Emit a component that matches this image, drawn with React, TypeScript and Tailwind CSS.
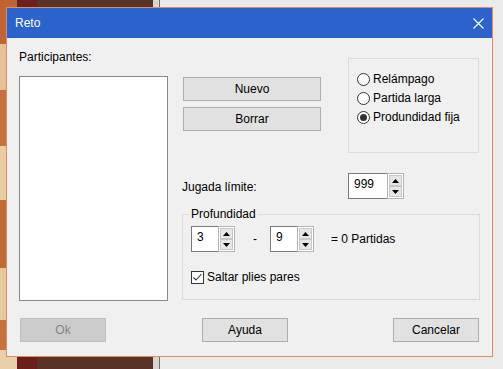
import React from "react";

function Btn({ label, disabled }: { label: string; disabled?: boolean }) {
  return (
    <div
      className={
        disabled
          ? "flex h-[24px] w-[86px] items-center justify-center border border-[#bfbfbf] bg-[#cccccc] text-[#838383]"
          : "flex h-[24px] w-[86px] items-center justify-center border border-[#adadad] bg-[#e1e1e1] text-black"
      }
    >
      {label}
    </div>
  );
}

function WideBtn({ label }: { label: string }) {
  return (
    <div className="flex h-[24px] w-[138px] items-center justify-center border border-[#adadad] bg-[#e1e1e1]">
      {label}
    </div>
  );
}

function Radio({ label, checked }: { label: string; checked?: boolean }) {
  return (
    <div className="flex h-[19px] items-center gap-[3px]">
      <div className="flex h-[13px] w-[13px] items-center justify-center rounded-full border border-[#333333] bg-white">
        {checked ? <div className="h-[7px] w-[7px] rounded-full bg-[#333333]" /> : null}
      </div>
      <span>{label}</span>
    </div>
  );
}

function Tri({ up }: { up?: boolean }) {
  return (
    <svg width="7" height="4" viewBox="0 0 7 4">
      {up ? <path d="M0 4 L3.5 0 L7 4 Z" fill="#000" /> : <path d="M0 0 L7 0 L3.5 4 Z" fill="#000" />}
    </svg>
  );
}

function Spin({ value, editClass }: { value: string; editClass: string }) {
  return (
    <div className="flex h-[26px]">
      <div className={editClass}>{value}</div>
      <div className="flex w-[17px] flex-col border border-[#b4b4b4] bg-white p-[1px]">
        <div className="flex flex-1 items-center justify-center border border-[#c8c8c8] bg-[#e6e6e6]">
          <Tri up />
        </div>
        <div className="flex flex-1 items-center justify-center border border-[#c8c8c8] bg-[#e6e6e6]">
          <Tri />
        </div>
      </div>
    </div>
  );
}

export default function App() {
  return (
    <div className="relative h-[369px] w-[503px] overflow-hidden font-['Liberation_Sans',Arial,sans-serif] text-[12px] leading-[15px] text-black">
      {/* desktop background */}
      <div className="flex h-full w-full">
        <div className="flex w-[17px] flex-col">
          <div className="h-[44px] bg-[#c06434]" />
          <div className="h-[46px] bg-[#e4c496]" />
          <div className="h-[56px] bg-[#c8713d]" />
          <div className="h-[54px] bg-[#e8cda2]" />
          <div className="h-[68px] bg-[#c26a36]" />
          <div className="h-[52px] bg-[#e6c99c]" />
          <div className="h-[30px] bg-[#c8703c]" />
          <div className="flex-1 bg-[#e8d0a8]" />
        </div>
        <div className="w-[20px] bg-[#6a1f1d]" />
        <div className="w-[116px] bg-[#5a3327]" />
        <div className="w-[6px] bg-[#d9d5d1]" />
        <div className="w-[1px] bg-[#707070]" />
        <div className="flex-1 bg-[#ebebeb]" />
      </div>

      {/* dialog window */}
      <div className="absolute left-[6px] top-[7px] flex h-[350px] w-[487px] flex-col border border-[#e48a60] bg-[#f0f0f0]">
        <div className="flex h-[30px] items-center justify-between bg-[#2b62cc] pl-[8px] pr-[8px] text-white">
          <span>Reto</span>
          <svg width="11" height="11" viewBox="0 0 11 11">
            <path d="M0.5 0.5 L10.5 10.5 M10.5 0.5 L0.5 10.5" stroke="#ffffff" strokeWidth="1.1" />
          </svg>
        </div>

        <div className="flex">
          {/* left column */}
          <div className="ml-[12px] flex w-[149px] flex-col">
            <div className="mt-[12px] h-[15px]">Participantes:</div>
            <div className="mt-[11px] h-[225px] border border-[#828790] bg-white" />
          </div>

          {/* right column */}
          <div className="ml-[14px] flex w-[298px] flex-col">
            <div className="mt-[20px] flex h-[95px]">
              <div className="ml-[1px] mt-[19px] flex flex-col gap-[6px]">
                <WideBtn label="Nuevo" />
                <WideBtn label="Borrar" />
              </div>
              <div className="ml-[27px] flex w-[131px] flex-col border border-[#dcdcdc] pl-[8px] pt-[11px]">
                <Radio label="Relámpago" />
                <Radio label="Partida larga" />
                <Radio label="Produndidad fija" checked />
              </div>
            </div>

            <div className="mt-[20px] flex h-[26px] items-center">
              <div className="w-[166px] pt-[2px]">Jugada límite:</div>
              <Spin
                value="999"
                editClass="h-full w-[39px] border border-r-0 border-[#7a7a7a] bg-white pl-[5px] pt-[3px]"
              />
            </div>

            <div className="relative mt-[15px] h-[86px] border border-[#dcdcdc] pl-[8px] pt-[11px]">
              <span className="absolute left-[6px] top-[-8px] bg-[#f0f0f0] px-[2px]">Profundidad</span>
              <div className="flex items-center">
                <Spin
                  value="3"
                  editClass="h-full w-[27px] border border-r-0 border-[#7a7a7a] bg-white pl-[5px] pt-[3px]"
                />
                <span className="ml-[18px]">-</span>
                <div className="ml-[13px]">
                  <Spin
                    value="9"
                    editClass="h-full w-[27px] border border-r-0 border-[#7a7a7a] bg-white pl-[5px] pt-[3px]"
                  />
                </div>
                <span className="ml-[17px]">= 0 Partidas</span>
              </div>
              <div className="mt-[18px] flex h-[15px] items-center gap-[3px]">
                <div className="flex h-[13px] w-[13px] items-center justify-center border border-[#333333] bg-white">
                  <svg width="11" height="11" viewBox="0 0 11 11">
                    <path d="M1.5 5.5 L4 8 L9.5 2" stroke="#333333" strokeWidth="1.1" fill="none" />
                  </svg>
                </div>
                <span>Saltar plies pares</span>
              </div>
            </div>
          </div>
        </div>

        <div className="ml-[13px] mt-[17px] flex">
          <Btn label="Ok" disabled />
          <div className="ml-[96px]">
            <Btn label="Ayuda" />
          </div>
          <div className="ml-[105px]">
            <Btn label="Cancelar" />
          </div>
        </div>
      </div>
    </div>
  );
}
